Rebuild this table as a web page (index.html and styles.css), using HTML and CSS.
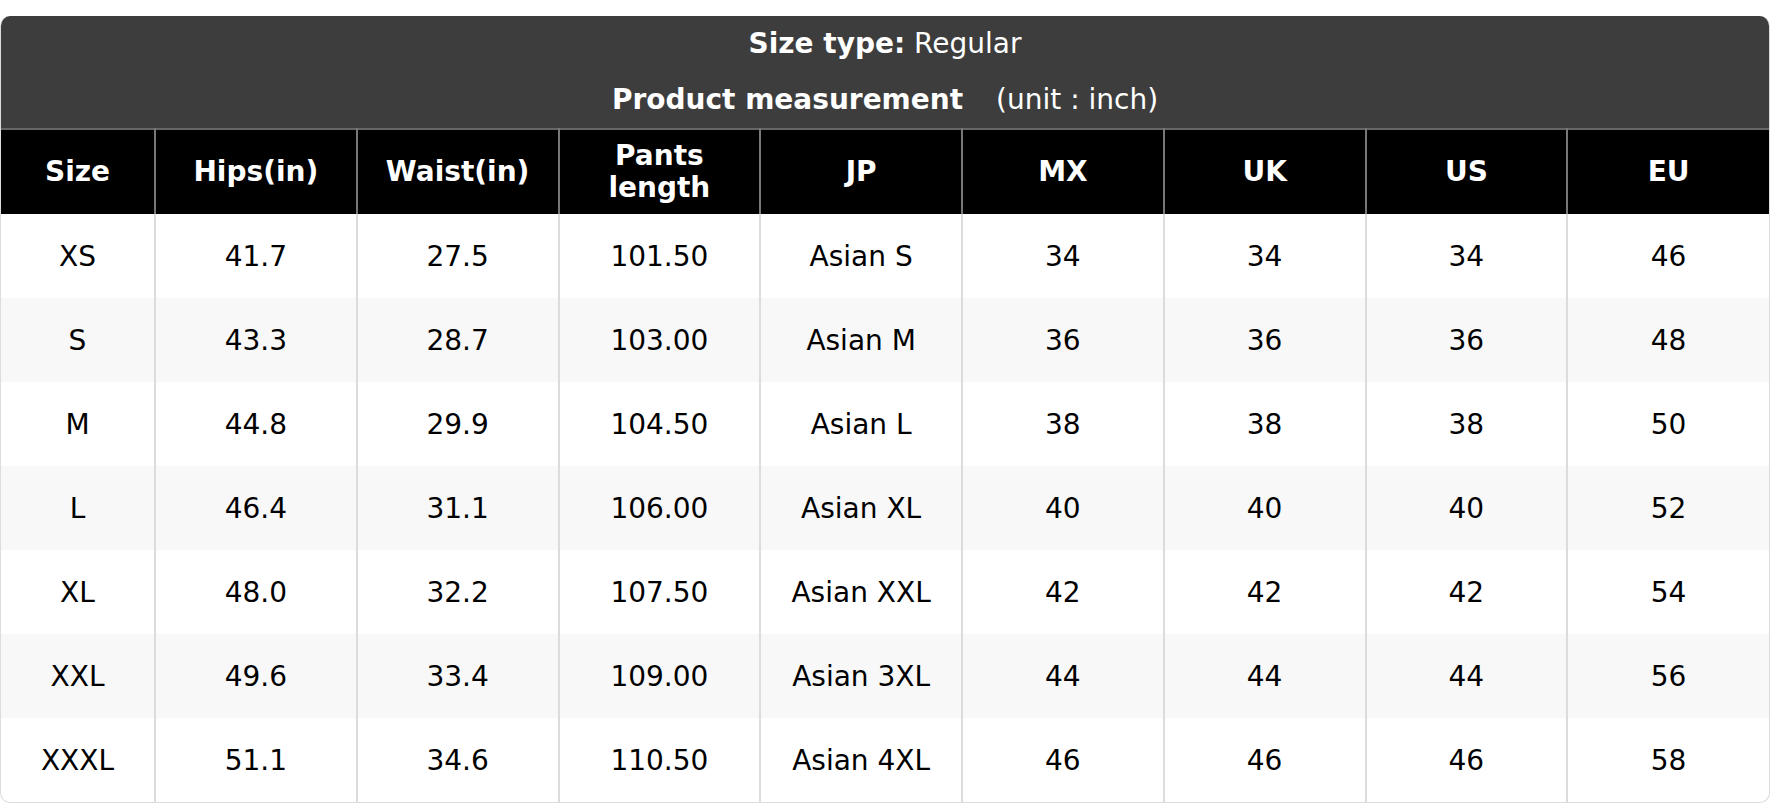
FILE: index.html
```html
<!DOCTYPE html>
<html>
<head>
<meta charset="utf-8">
<link rel="stylesheet" href="styles.css">
</head>
<body>
<div class="page">
  <div class="chart">
    <div class="chart-head">
      <div class="head-line"><b>Size type:</b> Regular</div>
      <div class="head-line"><b>Product measurement</b><span class="unit">(unit : inch)</span></div>
    </div>
    <table class="size-table">
      <colgroup>
        <col class="col-size">
        <col><col><col><col><col><col><col><col>
      </colgroup>
      <thead>
        <tr>
          <th>Size</th><th>Hips(in)</th><th>Waist(in)</th><th>Pants<br>length</th><th>JP</th><th>MX</th><th>UK</th><th>US</th><th>EU</th>
        </tr>
      </thead>
      <tbody>
        <tr><td>XS</td><td>41.7</td><td>27.5</td><td>101.50</td><td>Asian S</td><td>34</td><td>34</td><td>34</td><td>46</td></tr>
        <tr><td>S</td><td>43.3</td><td>28.7</td><td>103.00</td><td>Asian M</td><td>36</td><td>36</td><td>36</td><td>48</td></tr>
        <tr><td>M</td><td>44.8</td><td>29.9</td><td>104.50</td><td>Asian L</td><td>38</td><td>38</td><td>38</td><td>50</td></tr>
        <tr><td>L</td><td>46.4</td><td>31.1</td><td>106.00</td><td>Asian XL</td><td>40</td><td>40</td><td>40</td><td>52</td></tr>
        <tr><td>XL</td><td>48.0</td><td>32.2</td><td>107.50</td><td>Asian XXL</td><td>42</td><td>42</td><td>42</td><td>54</td></tr>
        <tr><td>XXL</td><td>49.6</td><td>33.4</td><td>109.00</td><td>Asian 3XL</td><td>44</td><td>44</td><td>44</td><td>56</td></tr>
        <tr><td>XXXL</td><td>51.1</td><td>34.6</td><td>110.50</td><td>Asian 4XL</td><td>46</td><td>46</td><td>46</td><td>58</td></tr>
      </tbody>
    </table>
  </div>
</div>
</body>
</html>
```
FILE: styles.css
```css
html, body {
  margin: 0;
  padding: 0;
  background: #fff;
}
body {
  font-family: "DejaVu Sans", Verdana, sans-serif;
  color: #000;
}
.page {
  padding-top: 16px;
}
.chart {
  border: 1px solid #dcdcdc;
  border-top: none;
  border-radius: 10px;
  overflow: hidden;
  width: 1770px;
  box-sizing: border-box;
}
.chart-head {
  background: #3d3d3d;
  color: #fff;
  height: 112px;
  box-sizing: border-box;
  padding-top: 9px;
  display: flex;
  flex-direction: column;
  align-items: center;
  gap: 18px;
  font-size: 28px;
  line-height: 38px;
}
.head-line b {
  font-weight: bold;
}
.unit {
  margin-left: 33px;
}
.size-table {
  width: 100%;
  border-collapse: collapse;
  table-layout: fixed;
  font-size: 28px;
}
.col-size {
  width: 154px;
}
.size-table th {
  background: #000;
  color: #fff;
  font-weight: bold;
  height: 84px;
  padding: 0;
  line-height: 32px;
  border-top: 2px solid #666;
  border-left: 2px solid #777;
  border-right: 2px solid #777;
  text-align: center;
  vertical-align: middle;
}
.size-table td {
  height: 84px;
  padding: 0;
  text-align: center;
  vertical-align: middle;
  border-left: 2px solid #dcdcdc;
  border-right: 2px solid #dcdcdc;
}
.size-table th:first-child,
.size-table td:first-child {
  border-left: none;
}
.size-table th:last-child,
.size-table td:last-child {
  border-right: none;
}
.size-table tbody tr:nth-child(even) td {
  background: #f8f8f8;
}
```
